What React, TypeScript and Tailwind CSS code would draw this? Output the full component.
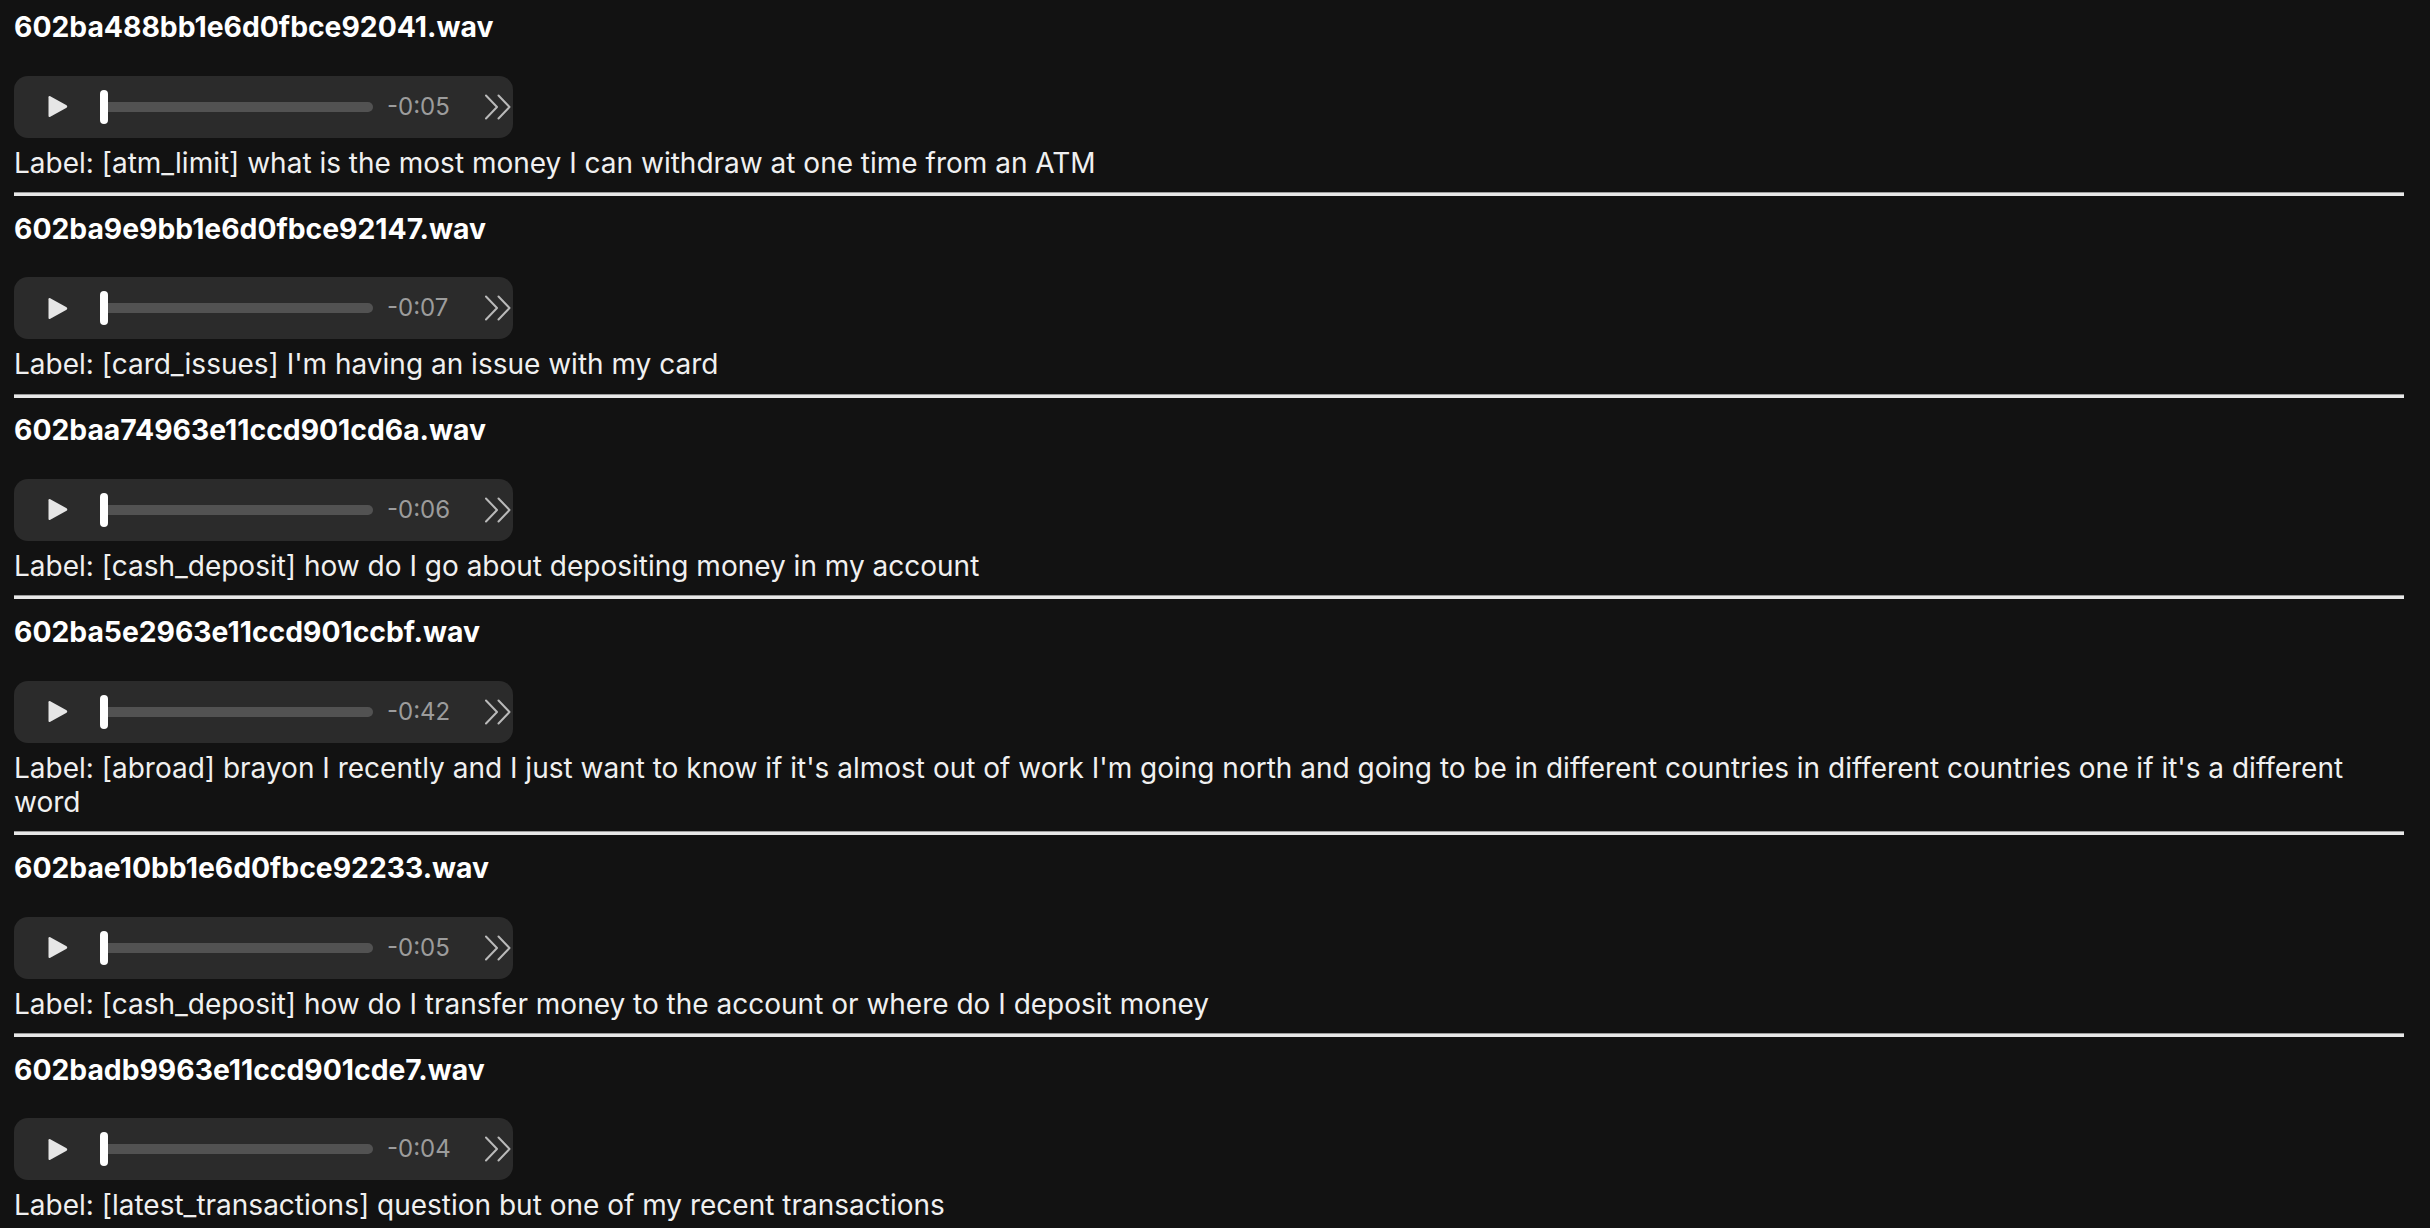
import React from "react";

type Item = { file: string; time: string; label: string };

const items: Item[] = [
  {
    file: "602ba488bb1e6d0fbce92041.wav",
    time: "-0:05",
    label: "[atm_limit] what is the most money I can withdraw at one time from an ATM",
  },
  {
    file: "602ba9e9bb1e6d0fbce92147.wav",
    time: "-0:07",
    label: "[card_issues] I'm having an issue with my card",
  },
  {
    file: "602baa74963e11ccd901cd6a.wav",
    time: "-0:06",
    label: "[cash_deposit] how do I go about depositing money in my account",
  },
  {
    file: "602ba5e2963e11ccd901ccbf.wav",
    time: "-0:42",
    label:
      "[abroad] brayon I recently and I just want to know if it's almost out of work I'm going north and going to be in different countries in different countries one if it's a different word",
  },
  {
    file: "602bae10bb1e6d0fbce92233.wav",
    time: "-0:05",
    label: "[cash_deposit] how do I transfer money to the account or where do I deposit money",
  },
  {
    file: "602badb9963e11ccd901cde7.wav",
    time: "-0:04",
    label: "[latest_transactions] question but one of my recent transactions",
  },
];

function PlayIcon() {
  return (
    <svg width="21" height="23" viewBox="0 0 21 23" className="block shrink-0">
      <path
        d="M1.5 2.2 Q1.5 0.3 3.3 1.2 L19.6 10.2 Q21 11.5 19.6 12.8 L3.3 21.8 Q1.5 22.7 1.5 20.8 Z"
        fill="#e6e6e6"
      />
    </svg>
  );
}

function ChevronsIcon() {
  return (
    <svg width="28" height="26" viewBox="0 0 28 26" className="block shrink-0">
      <path
        d="M2 1.5 L13 13 L2 24.5 M14.5 1.5 L25.5 13 L14.5 24.5"
        fill="none"
        stroke="#b9b9b9"
        strokeWidth="2"
        strokeLinecap="round"
        strokeLinejoin="round"
      />
    </svg>
  );
}

function Player({ time }: { time: string }) {
  return (
    <div className="flex h-[62px] w-[499px] items-center overflow-hidden rounded-[14px] bg-[#2b2b2b] pl-[33px]">
      <PlayIcon />
      <div className="ml-[32px] flex w-[273px] items-center">
        <div className="h-[34px] w-[8px] shrink-0 rounded-full bg-white" />
        <div className="h-[10px] flex-1 rounded-r-full bg-[#525252]" />
      </div>
      <div className="ml-[14px] w-[97px] shrink-0 text-[24px] leading-[30px] text-[#9c9c9c]">
        {time}
      </div>
      <ChevronsIcon />
    </div>
  );
}

export default function App() {
  return (
    <div
      className="min-h-screen bg-[#121212] pl-[14px] pr-[26px] pt-[10px] text-white"
      style={{ fontFamily: "Inter, 'Noto Sans', sans-serif" }}
    >
      {items.map((it) => (
        <div key={it.file} className="flex flex-col pb-[15.8px]">
          <div className="text-[28.3px] font-bold leading-[34px] text-white">{it.file}</div>
          <div className="mt-[31.5px]">
            <Player time={it.time} />
          </div>
          <div className="mt-[8px] text-[28px] leading-[34.4px] text-[#f0f0f0]">
            Label: {it.label}
          </div>
          <div className="mt-[12px] h-[4px] border-t border-[#9b9b9b] bg-[#e8e8e8]" />
        </div>
      ))}
    </div>
  );
}
